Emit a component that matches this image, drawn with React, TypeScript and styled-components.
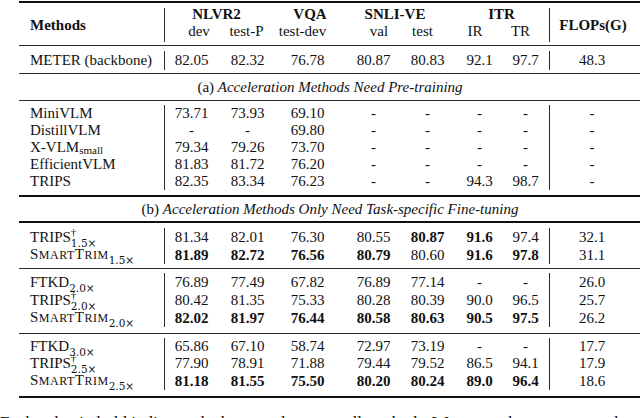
import React from "react";
import styled, { createGlobalStyle } from "styled-components";

const GlobalStyle = createGlobalStyle`
  html, body {
    margin: 0;
    padding: 0;
    background: #ffffff;
    overflow: hidden;
  }
  body {
    font-family: "Liberation Serif", "Times New Roman", serif;
    color: #111111;
  }
`;

// column tracks: methods | dev | test-P | test-dev | val | test | IR | TR | FLOPs
const COLS = "146px 53px 59px 61px 71px 37px 67px 36px 92px";

const Page = styled.div`
  display: flex;
  flex-direction: column;
  width: 640px;
  height: 418px;
  overflow: hidden;
  padding-top: 1px;
  box-sizing: border-box;
`;

const Table = styled.div`
  display: flex;
  flex-direction: column;
  width: 622px;
  margin-left: 19px;
  font-size: 15px;
  line-height: 17px;
`;

const Rule = styled.div<{ $thick?: boolean }>`
  height: 0;
  border-top: ${({ $thick }) => ($thick ? "2px solid #111" : "1px solid #2b2b2b")};
`;

const Group = styled.div<{ $pt: number; $pb: number }>`
  display: flex;
  flex-direction: column;
  padding-top: ${({ $pt }) => $pt}px;
  padding-bottom: ${({ $pb }) => $pb}px;
`;

const HeaderGrid = styled.div`
  display: grid;
  grid-template-columns: ${COLS};
  grid-template-rows: 17px 19px;
`;

const Row = styled.div<{ $h: number }>`
  display: grid;
  grid-template-columns: ${COLS};
  height: ${({ $h }) => $h}px;
`;

const Cell = styled.div<{ $shift?: number; $bold?: boolean; $top?: boolean }>`
  display: flex;
  justify-content: center;
  align-items: ${({ $top }) => ($top ? "flex-start" : "center")};
  white-space: nowrap;
  font-weight: ${({ $bold }) => ($bold ? 700 : 400)};
  padding-left: ${({ $shift = 0 }) => Math.max(0, $shift * 2)}px;
  padding-right: ${({ $shift = 0 }) => Math.max(0, -$shift * 2)}px;
`;

const GroupTitle = styled(Cell)<{ $col: string }>`
  grid-column: ${({ $col }) => $col};
  grid-row: 1;
  font-weight: 700;
`;

const SubHead = styled(Cell)`
  grid-row: 2;
`;

const MethodCell = styled.div<{ $head?: boolean }>`
  display: flex;
  align-items: center;
  padding-left: 11px;
  white-space: nowrap;
  font-weight: ${({ $head }) => ($head ? 700 : 400)};
  border-right: 1px solid #2b2b2b;
  ${({ $head }) => ($head ? "grid-row: 1 / span 2; margin: 2px 0 0;" : "")}
`;

const FlopsCell = styled(Cell)<{ $head?: boolean }>`
  border-left: 1px solid #2b2b2b;
  ${({ $head }) => ($head ? "grid-column: 9; grid-row: 1 / span 2; margin-top: 2px;" : "")}
`;

const Caption = styled.div<{ $h: number }>`
  display: flex;
  justify-content: center;
  align-items: center;
  height: ${({ $h }) => $h}px;
  white-space: nowrap;

  em {
    font-style: italic;
  }
`;

const Sup = styled.span`
  font-size: 11px;
  line-height: 0;
  vertical-align: 6px;
`;

const Sub = styled.span<{ $under?: boolean }>`
  font-family: "DejaVu Serif", serif;
  font-size: 10.5px;
  line-height: 0;
  vertical-align: -5px;
  margin-left: ${({ $under }) => ($under ? "-5.5px" : "0")};
`;

const SmallSub = styled.span`
  font-size: 11px;
  line-height: 0;
  vertical-align: -2px;
`;

const Caps = styled.span`
  letter-spacing: 0.5px;
`;

const SmallCap = styled.span`
  font-size: 12px;
`;

const Paragraph = styled.p`
  margin: 15px 0 0;
  font-size: 17px;
  line-height: 20px;
  white-space: nowrap;
`;

type Val = { v: string; bold?: boolean };
type Entry = { name: React.ReactNode; vals: Val[]; flops: string; h: number };

const n = (v: string): Val => ({ v });
const b = (v: string): Val => ({ v, bold: true });
const list = (...vs: string[]) => vs.map(n);

// data cells are centred on the numbers; TR sits left of the divider
const DATA_SHIFT = [0, 0, 0, 0, 0, 0, -5.5];

const Trips = ({ s }: { s: string }) => (
  <>
    TRIPS<Sup>†</Sup>
    <Sub $under>{s}</Sub>
  </>
);

const Smart = ({ s }: { s: string }) => (
  <>
    <Caps>
      S<SmallCap>MART</SmallCap>T<SmallCap>RIM</SmallCap>
    </Caps>
    <Sub>{s}</Sub>
  </>
);

const Ftkd = ({ s }: { s: string }) => (
  <>
    FTKD<Sub>{s}</Sub>
  </>
);

const backbone: Entry[] = [
  { name: "METER (backbone)", vals: list("82.05", "82.32", "76.78", "80.87", "80.83", "92.1", "97.7"), flops: "48.3", h: 19 },
];

const pretrain: Entry[] = [
  { name: "MiniVLM", vals: list("73.71", "73.93", "69.10", "-", "-", "-", "-"), flops: "-", h: 17 },
  { name: "DistillVLM", vals: list("-", "-", "69.80", "-", "-", "-", "-"), flops: "-", h: 17 },
  {
    name: (
      <>
        X-VLM<SmallSub>small</SmallSub>
      </>
    ),
    vals: list("79.34", "79.26", "73.70", "-", "-", "-", "-"),
    flops: "-",
    h: 17,
  },
  { name: "EfficientVLM", vals: list("81.83", "81.72", "76.20", "-", "-", "-", "-"), flops: "-", h: 17 },
  { name: "TRIPS", vals: list("82.35", "83.34", "76.23", "-", "-", "94.3", "98.7"), flops: "-", h: 17 },
];

const speed15: Entry[] = [
  {
    name: <Trips s="1.5×" />,
    vals: [n("81.34"), n("82.01"), n("76.30"), n("80.55"), b("80.87"), b("91.6"), n("97.4")],
    flops: "32.1",
    h: 18,
  },
  {
    name: <Smart s="1.5×" />,
    vals: [b("81.89"), b("82.72"), b("76.56"), b("80.79"), n("80.60"), b("91.6"), b("97.8")],
    flops: "31.1",
    h: 16,
  },
];

const speed20: Entry[] = [
  { name: <Ftkd s="2.0×" />, vals: list("76.89", "77.49", "67.82", "76.89", "77.14", "-", "-"), flops: "26.0", h: 18 },
  { name: <Trips s="2.0×" />, vals: list("80.42", "81.35", "75.33", "80.28", "80.39", "90.0", "96.5"), flops: "25.7", h: 18 },
  {
    name: <Smart s="2.0×" />,
    vals: [b("82.02"), b("81.97"), b("76.44"), b("80.58"), b("80.63"), b("90.5"), b("97.5")],
    flops: "26.2",
    h: 18,
  },
];

const speed25: Entry[] = [
  { name: <Ftkd s="3.0×" />, vals: list("65.86", "67.10", "58.74", "72.97", "73.19", "-", "-"), flops: "17.7", h: 17 },
  { name: <Trips s="2.5×" />, vals: list("77.90", "78.91", "71.88", "79.44", "79.52", "86.5", "94.1"), flops: "17.9", h: 17 },
  {
    name: <Smart s="2.5×" />,
    vals: [b("81.18"), b("81.55"), b("75.50"), b("80.20"), b("80.24"), b("89.0"), b("96.4")],
    flops: "18.6",
    h: 17,
  },
];

const DataRow = ({ entry }: { entry: Entry }) => (
  <Row $h={entry.h}>
    <MethodCell>
      <span>{entry.name}</span>
    </MethodCell>
    {entry.vals.map((val, i) => (
      <Cell key={i} $bold={val.bold} $shift={DATA_SHIFT[i]}>
        {val.v}
      </Cell>
    ))}
    <FlopsCell $shift={-3.5}>{entry.flops}</FlopsCell>
  </Row>
);

const Block = ({ rows, pt, pb }: { rows: Entry[]; pt: number; pb: number }) => (
  <Group $pt={pt} $pb={pb}>
    {rows.map((entry, i) => (
      <DataRow key={i} entry={entry} />
    ))}
  </Group>
);

const SUBHEADS: { label: string; shift: number }[] = [
  { label: "dev", shift: 7.5 },
  { label: "test-P", shift: -1 },
  { label: "test-dev", shift: -5 },
  { label: "val", shift: 5.5 },
  { label: "test", shift: -5 },
  { label: "IR", shift: -4.5 },
  { label: "TR", shift: -10.5 },
];

export default function App() {
  return (
    <>
      <GlobalStyle />
      <Page>
        <Table>
          <Rule $thick />
          <Group $pt={3} $pb={0}>
            <HeaderGrid>
              <MethodCell $head>Methods</MethodCell>
              <GroupTitle $col="2 / span 2" $shift={-4.5}>NLVR2</GroupTitle>
              <GroupTitle $col="4" $shift={2.5}>VQA</GroupTitle>
              <GroupTitle $col="5 / span 2" $shift={3}>SNLI-VE</GroupTitle>
              <GroupTitle $col="7 / span 2" $shift={4}>ITR</GroupTitle>
              {SUBHEADS.map((s) => (
                <SubHead key={s.label} $shift={s.shift} $top>
                  {s.label}
                </SubHead>
              ))}
              <FlopsCell $head $bold $shift={-2.5}>
                FLOPs(G)
              </FlopsCell>
            </HeaderGrid>
          </Group>
          <Rule style={{ marginTop: 3 }} />
          <Block rows={backbone} pt={5} pb={3} />
          <Rule />
          <Caption $h={26}>
            (a)&nbsp;<em>Acceleration Methods Need Pre-training</em>
          </Caption>
          <Rule />
          <Block rows={pretrain} pt={4} pb={5} />
          <Rule $thick />
          <Caption $h={24}>
            (b)&nbsp;<em>Acceleration Methods Only Need Task-specific Fine-tuning</em>
          </Caption>
          <Rule $thick />
          <Block rows={speed15} pt={5} pb={6} />
          <Rule />
          <Block rows={speed20} pt={4} pb={6} />
          <Rule />
          <Block rows={speed25} pt={4} pb={7} />
          <Rule $thick />
        </Table>
        <Paragraph>
          Each value in bold indicates the best result among all methods. We report the average results of five runs.
        </Paragraph>
      </Page>
    </>
  );
}
